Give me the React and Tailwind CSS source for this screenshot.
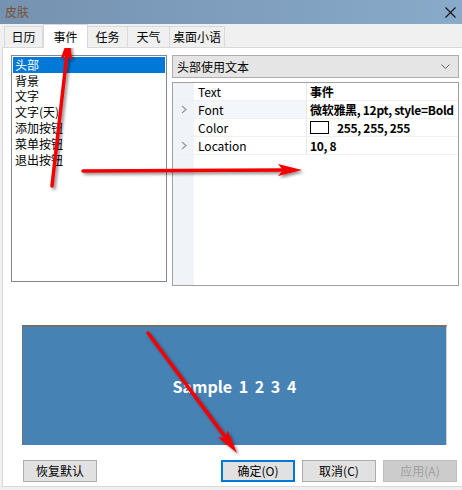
import React from 'react'

const font = { fontFamily: '"Noto Sans CJK SC", "Noto Sans", sans-serif' }

const tabs = ['日历', '事件', '任务', '天气', '桌面小语']
const tabW = [39, 45, 40, 42, 55]
const items = ['头部', '背景', '文字', '文字(天)', '添加按钮', '菜单按钮', '退出按钮']

const props = [
  { name: 'Text', value: '事件', expand: false },
  { name: 'Font', value: '微软雅黑, 12pt, style=Bold', expand: true },
  { name: 'Color', value: '255, 255, 255', swatch: true, expand: false },
  { name: 'Location', value: '10, 8', expand: true },
]

function Arrow({ x1, y1, x2, y2 }) {
  const dx = x2 - x1
  const dy = y2 - y1
  const len = Math.hypot(dx, dy)
  const ux = dx / len
  const uy = dy / len
  const hl = 24
  const hw = 6
  const bx = x2 - ux * hl
  const by = y2 - uy * hl
  const pts = `${x2},${y2} ${bx - uy * hw},${by + ux * hw} ${x2 - ux * (hl - 5)},${y2 - uy * (hl - 5)} ${bx + uy * hw},${by - ux * hw}`
  return (
    <g filter="url(#sh)">
      <line x1={x1} y1={y1} x2={x2 - ux * 16} y2={y2 - uy * 16} stroke="#f20000" strokeWidth="3.5" strokeLinecap="round" />
      <polygon points={pts} fill="#f20000" />
    </g>
  )
}

function Btn({ children, primary, disabled }) {
  return (
    <div
      className={
        'w-[74px] h-[22px] flex items-center justify-center text-[12px] ' +
        (primary
          ? 'border-2 border-[#0078d7] bg-[#e1e1e1] text-[#000]'
          : disabled
          ? 'border border-[#bfbfbf] bg-[#cccccc] text-[#a0a0a0]'
          : 'border border-[#adadad] bg-[#e1e1e1] text-[#000]')
      }
    >
      {children}
    </div>
  )
}

export default function App() {
  return (
    <div className="relative w-[462px] h-[490px] overflow-hidden bg-[#f0f0f0] flex flex-col" style={font}>
      <div className="h-[24px] flex items-center justify-between pl-[5px] pr-[6px] bg-gradient-to-r from-[#7592b0] to-[#89aaca]">
        <span className="text-[12px] text-[#7a5232] leading-none">皮肤</span>
        <svg width="11" height="11" viewBox="0 0 11 11">
          <path d="M0.5 0.5 L10.5 10.5 M10.5 0.5 L0.5 10.5" stroke="#111" strokeWidth="1.1" />
        </svg>
      </div>

      <div className="h-[23px] flex items-end pl-[4px]">
        {tabs.map((t, i) => (
          <div
            key={t}
            style={{ width: tabW[i] }}
            className={
              'flex items-center justify-center text-[12px] text-black border-[#d9d9d9] ' +
              (i === 1
                ? 'h-[24px] -mb-px bg-white border-l border-r border-t z-10'
                : 'h-[21px] bg-[#f0f0f0] border-t border-r ' + (i === 0 ? 'border-l' : ''))
            }
          >
            {t}
          </div>
        ))}
      </div>

      <div className="flex-1 ml-[2px] mb-[3px] bg-white border-t border-l border-b border-[#d9d9d9] flex flex-col">
        <div className="flex pt-[7px] pl-[8px] gap-[5px]">
          <div className="w-[156px] h-[227px] border border-[#828790] bg-white pt-px px-px">
            {items.map((it, i) => (
              <div
                key={it}
                className={
                  'h-[15.8px] flex items-center pl-[2px] text-[12px] leading-none ' +
                  (i === 0 ? 'bg-[#0078d7] text-white' : 'text-black')
                }
              >
                {it}
              </div>
            ))}
          </div>

          <div className="w-[287px] flex flex-col">
            <div className="h-[23px] border border-[#adadad] bg-[#e5e5e5] flex items-center justify-between pl-[4px] pr-[8px]">
              <span className="text-[12px] text-black">头部使用文本</span>
              <svg width="9" height="5" viewBox="0 0 9 5">
                <path d="M0.5 0.5 L4.5 4.5 L8.5 0.5" stroke="#666" strokeWidth="1" fill="none" />
              </svg>
            </div>
            <div className="mt-[4px] h-[204px] border border-[#a0a0a0] bg-white flex flex-col">
              {props.map((p, i) => (
                <div key={p.name} className="flex h-[18px] border-b border-[#eef0f3]">
                  <div className="w-[21px] bg-[#f0f3f8] flex items-center justify-center">
                    {p.expand && (
                      <svg width="6" height="9" viewBox="0 0 6 9">
                        <path d="M1 1 L5 4.5 L1 8" stroke="#9a9a9a" strokeWidth="1.3" fill="none" />
                      </svg>
                    )}
                  </div>
                  <div
                    className={
                      'w-[113px] flex items-center pl-[4px] text-[12px] text-black border-r border-[#e8e8e8] ' +
                      (i === 1 ? 'bg-[#f3f6fa]' : 'bg-white')
                    }
                  >
                    {p.name}
                  </div>
                  <div className="flex-1 flex items-center pl-[3px] text-[12px] font-bold text-black whitespace-nowrap tracking-[-0.3px]">
                    {p.swatch && <span className="w-[19px] h-[13px] border border-black bg-white mr-[8px]" />}
                    {p.value}
                  </div>
                </div>
              ))}
              <div className="flex-1 flex">
                <div className="w-[21px] bg-[#f0f3f8]" />
                <div className="flex-1" />
              </div>
            </div>
          </div>
        </div>

        <div className="ml-[19px] mt-[39px] w-[425px] h-[120px] bg-[#4682b4] border-t-2 border-l border-r border-[#707070] border-r-[#d0d0d0] flex items-center justify-center">
          <span className="text-[16px] font-bold text-white [word-spacing:3px]">Sample 1 2 3 4</span>
        </div>

        <div className="flex mt-[15px] pl-[20px]">
          <Btn>恢复默认</Btn>
          <div className="ml-[124px]">
            <Btn primary>确定(O)</Btn>
          </div>
          <div className="ml-[7px]">
            <Btn>取消(C)</Btn>
          </div>
          <div className="ml-[7px]">
            <Btn disabled>应用(A)</Btn>
          </div>
        </div>
      </div>

      <svg className="absolute inset-0 pointer-events-none" width="462" height="490">
        <defs>
          <filter id="sh" x="-20%" y="-20%" width="140%" height="140%">
            <feDropShadow dx="2" dy="2" stdDeviation="1.5" floodColor="#000" floodOpacity="0.45" />
          </filter>
        </defs>
        <Arrow x1={52} y1={186} x2={69} y2={36} />
        <Arrow x1={83} y1={171} x2={302} y2={170} />
        <Arrow x1={148} y1={333} x2={237} y2={453} />
      </svg>
    </div>
  )
}
